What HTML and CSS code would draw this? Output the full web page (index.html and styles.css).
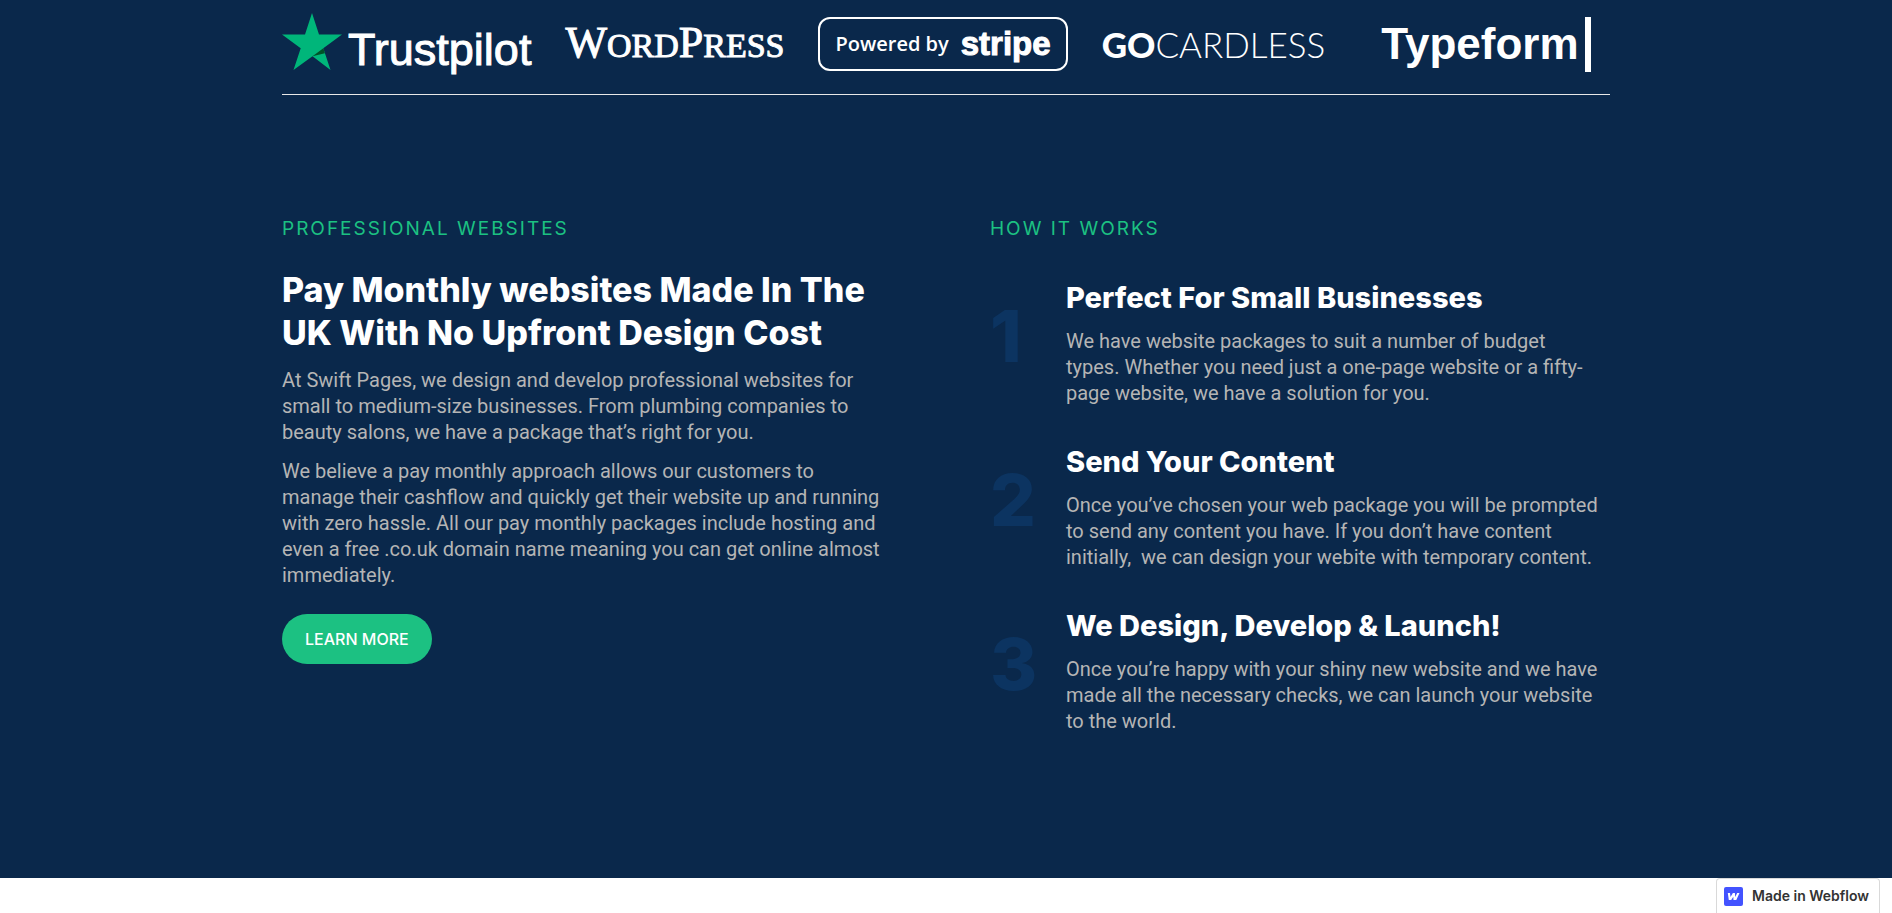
FILE: index.html
```html
<!DOCTYPE html>
<html lang="en">
<head>
<meta charset="utf-8">
<meta name="viewport" content="width=device-width, initial-scale=1">
<title>Swift Pages</title>
<link rel="stylesheet" href="styles.css">
</head>
<body>
<main class="section">
  <div class="container">
    <div class="logos">
      <div class="logo trustpilot">
        <svg class="star" viewBox="0 0 60 58" aria-hidden="true"><path fill="#00b67a" d="M30 0 37 21.500H60L41.300 35.300 48.500 57 30.500 43.300 11.500 57 18.700 35.300 0 21.500H23Z"/><path fill="#005128" d="M42.900 40.200 41.300 35.300 30.500 43.300Z"/></svg>
        <span class="trustpilot-name">Trustpilot</span>
      </div>
      <div class="logo wordpress"><span>W<small>ORD</small>P<small>RESS</small></span></div>
      <div class="logo stripe"><span class="powered">Powered by</span><span class="stripe-name">stripe</span></div>
      <div class="logo gocardless"><span><b>GO</b>CARDLESS</span></div>
      <div class="logo typeform"><span>Typeform</span><i class="cursor"></i></div>
    </div>
    <div class="columns">
      <section>
        <p class="eyebrow">PROFESSIONAL WEBSITES</p>
        <h2 class="title">Pay Monthly websites Made In The UK With No Upfront Design Cost</h2>
        <p class="text">At Swift Pages, we design and develop professional websites for small to medium-size businesses. From plumbing companies to beauty salons, we have a package that’s right for you.</p>
        <p class="text">We believe a pay monthly approach allows our customers to manage their cashflow and quickly get their website up and running with zero hassle. All our pay monthly packages include hosting and even a free .co.uk domain name meaning you can get online almost immediately.</p>
        <a class="button" href="#">LEARN MORE</a>
      </section>
      <section>
        <p class="eyebrow">HOW IT WORKS</p>
        <div class="steps">
          <div class="step">
            <div class="number">1</div>
            <div>
              <h3 class="step-title">Perfect For Small Businesses</h3>
              <p class="text">We have website packages to suit a number of budget types. Whether you need just a one-page website or a fifty-page website, we have a solution for you.</p>
            </div>
          </div>
          <div class="step">
            <div class="number">2</div>
            <div>
              <h3 class="step-title">Send Your Content</h3>
              <p class="text">Once you’ve chosen your web package you will be prompted to send any content you have. If you don’t have content initially, &nbsp;we can design your webite with temporary content.</p>
            </div>
          </div>
          <div class="step">
            <div class="number">3</div>
            <div>
              <h3 class="step-title">We Design, Develop &amp; Launch!</h3>
              <p class="text">Once you’re happy with your shiny new website and we have made all the necessary checks, we can launch your website to the world.</p>
            </div>
          </div>
        </div>
      </section>
    </div>
  </div>
</main>
<footer class="footer">
  <a class="badge" href="#">
    <svg class="badge-icon" viewBox="0 0 19 19" aria-hidden="true"><rect width="19" height="19" rx="2" fill="#4353ff"/><path fill="#fff" d="M15.500 6 12.300 13H9.500L9.300 9.800 7.200 13H4.800L3.800 6H6L6.500 10 8.900 6H10.900L11.200 10 13.200 6Z"/></svg>
    <span>Made in Webflow</span>
  </a>
</footer>
</body>
</html>
```
FILE: styles.css
```css
* { box-sizing: border-box; }
body {
  display: flex;
  flex-direction: column;
  min-height: 100vh;
  margin: 0;
  background: #fff;
  font-family: Roboto, sans-serif;
}
.section { padding: 0 24px 144px; background: #0a284b; color: #fff; }
.container { max-width: 1328px; margin: 0 auto; }
.logos {
  display: flex;
  align-items: center;
  gap: 34px;
  padding: 13px 0 19px;
  border-bottom: 1px solid #e8e8e8;
}
.logo { display: flex; align-items: center; height: 62px; white-space: nowrap; }
.trustpilot { gap: 6px; align-items: flex-start; }
.star { width: 60px; height: 58px; }
.trustpilot-name {
  padding-top: 11px;
  font: 45px/52px "Liberation Sans", Arial, sans-serif;
  -webkit-text-stroke: 1px #fff;
}
.wordpress { font: 44px/60px "Liberation Serif", serif; -webkit-text-stroke: 1px #fff; }
.wordpress small { font-size: 34px; }
.stripe {
  gap: 12px;
  height: 54px;
  padding: 0 15px;
  border: 2px solid #fff;
  border-radius: 12px;
}
.powered { font: 600 20px/50px "Open Sans", sans-serif; }
.stripe-name { font: 700 33px/44px "Liberation Sans", Arial, sans-serif; -webkit-text-stroke: 1px #fff; }
.gocardless { font: 300 35px/60px Lato, sans-serif; }
.gocardless b { font-weight: 900; }
.typeform { gap: 6px; margin-left: 22px; font: 700 44px/60px "Liberation Sans", Arial, sans-serif; }
.cursor { width: 6px; height: 55px; background: #fff; }
.columns { display: grid; grid-template-columns: 1fr 1fr; gap: 88px; padding-top: 119px; }
.eyebrow {
  margin: 0;
  color: #1cc182;
  font: 19px/30px Inter, sans-serif;
  letter-spacing: 2px;
}
.title { margin: 24px 0 13px; font: 800 34px/43px Inter, sans-serif; }
.text { max-width: 604px; margin: 0 0 13px; color: #b5b5b5; font-size: 20px; line-height: 26px; }
.button {
  display: inline-block;
  margin-top: 13px;
  padding: 0 23px;
  border-radius: 25px;
  background: #1cc182;
  color: #fff;
  font: 500 16px/50px Inter, sans-serif;
  text-decoration: none;
}
.steps { display: grid; gap: 36px; padding-top: 34px; }
.step { display: grid; grid-template-columns: 76px 1fr; }
.step .text { max-width: 535px; margin: 0; }
.number { padding-top: 18px; color: #0c3461; font: 800 72px/80px Inter, sans-serif; }
.step-title { margin: 0 0 10px; font: 800 29px/40px Inter, sans-serif; }
.footer { display: flex; flex: 1; justify-content: flex-end; padding: 0 12px; }
.badge {
  display: flex;
  align-items: center;
  gap: 9px;
  height: 35px;
  padding: 0 10px 0 7px;
  border: 1px solid #d9d9d9;
  border-bottom: 0;
  border-radius: 4px 4px 0 0;
  color: #333;
  font: 600 14px/20px Inter, sans-serif;
  text-decoration: none;
}
.badge-icon { width: 19px; height: 19px; }
```
